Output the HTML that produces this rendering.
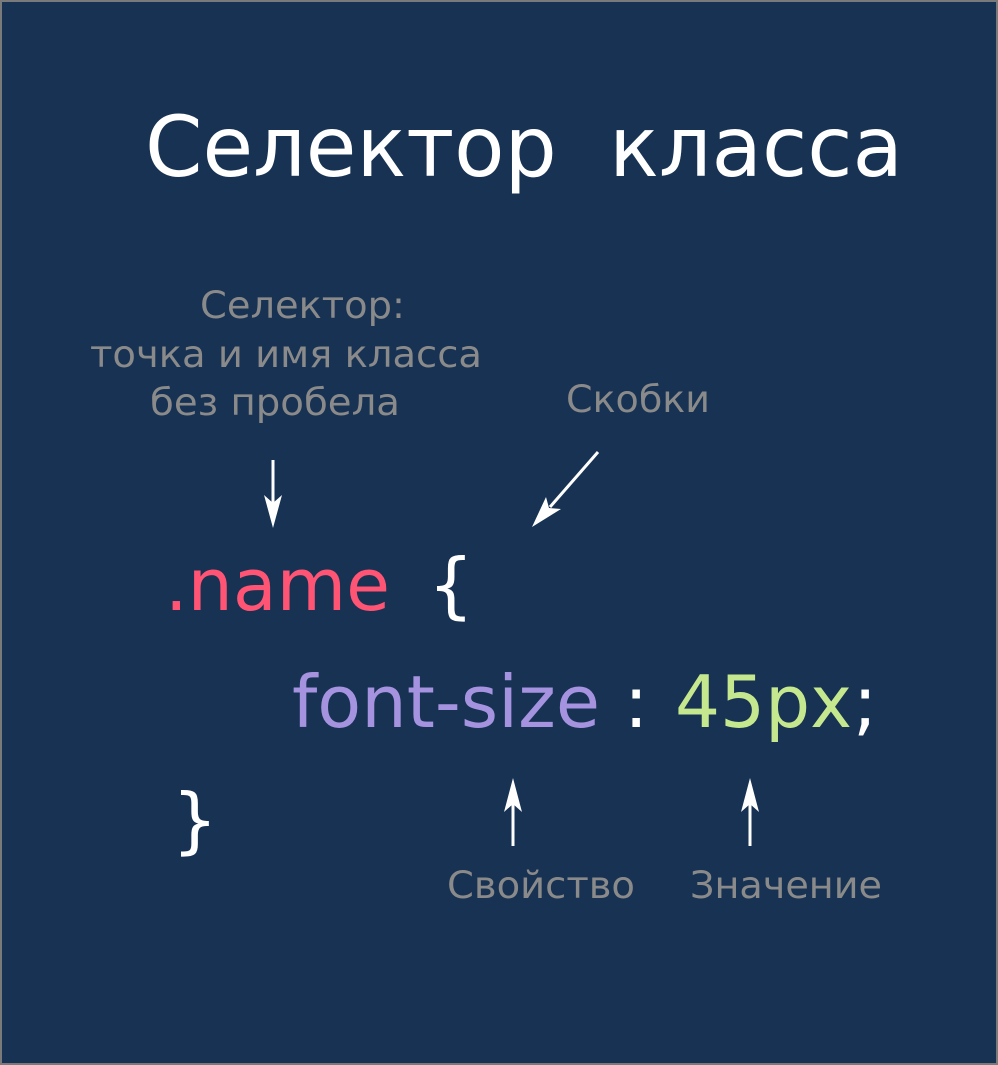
<!DOCTYPE html>
<html><head><meta charset="utf-8"><style>
html,body{margin:0;padding:0;background:#173253}
svg{display:block}
text{font-family:"DejaVu Sans","Liberation Sans",sans-serif}
</style></head><body>
<svg width="998" height="1065" viewBox="0 0 998 1065">
<rect x="1" y="1" width="996" height="1063" fill="#173253" stroke="#7a7a7a" stroke-width="2"/>
<text x="145" y="176" font-size="84" fill="#fff" textLength="758" lengthAdjust="spacingAndGlyphs" xml:space="preserve">Селектор  класса</text>
<g font-size="37" fill="#8a8a8a" lengthAdjust="spacingAndGlyphs">
<text x="200" y="318" textLength="205" lengthAdjust="spacingAndGlyphs">Селектор:</text>
<text x="90" y="367" textLength="392" lengthAdjust="spacingAndGlyphs">точка и имя класса</text>
<text x="150" y="415" textLength="250" lengthAdjust="spacingAndGlyphs">без пробела</text>
<text x="566" y="412" textLength="144" lengthAdjust="spacingAndGlyphs">Скобки</text>
<text x="447" y="898" textLength="188" lengthAdjust="spacingAndGlyphs">Свойство</text>
<text x="690" y="898" textLength="192" lengthAdjust="spacingAndGlyphs">Значение</text>
</g>
<g font-size="72">
<text x="165" y="610" fill="#ff5474" textLength="225" lengthAdjust="spacingAndGlyphs">.name</text>
<text x="428" y="610" fill="#fff">{</text>
<text x="292" y="727" fill="#a593e0" textLength="308" lengthAdjust="spacingAndGlyphs">font-size</text>
<text x="624" y="727" fill="#fff">:</text>
<text x="675" y="727" fill="#c5e88f" textLength="177" lengthAdjust="spacingAndGlyphs">45px</text>
<text x="853" y="727" fill="#fff">;</text>
<text x="172" y="845" fill="#fff">}</text>
</g>
<g stroke="#fff" stroke-width="3" fill="#fff">
<line x1="273" y1="460" x2="273" y2="505"/>
<path d="M273 528 L264 495 L273 503 L282 495 Z" stroke="none"/>
<line x1="598" y1="452" x2="550" y2="507"/>
<path d="M532 527 L546 497 L549 508 L561 509 Z" stroke="none"/>
<line x1="513" y1="846" x2="513" y2="800"/>
<path d="M513 778 L504 812 L513 804 L522 812 Z" stroke="none"/>
<line x1="750" y1="846" x2="750" y2="800"/>
<path d="M750 778 L741 812 L750 804 L759 812 Z" stroke="none"/>
</g>
</svg>
</body></html>
